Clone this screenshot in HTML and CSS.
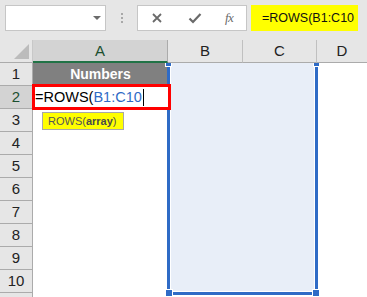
FILE: index.html
```html
<!DOCTYPE html>
<html>
<head>
<meta charset="utf-8">
<link rel="stylesheet" href="styles.css">
</head>
<body>
<div class="toolbar">
  <div class="namebox"><span class="dd"></span></div>
  <div class="grip"><i></i><i></i><i></i></div>
  <div class="fxbox">
    <svg class="ico" width="12" height="12" viewBox="0 0 12 12"><path d="M2 2 L10 10 M10 2 L2 10" stroke="#6a6a6a" stroke-width="1.8" fill="none"/></svg>
    <svg class="ico" width="14" height="12" viewBox="0 0 14 12"><path d="M1.5 6.5 L5 10 L12.5 2" stroke="#6a6a6a" stroke-width="2.2" fill="none"/></svg>
    <span class="fx">fx</span>
  </div>
  <div class="formula">=ROWS(B1:C10</div>
</div>
<div class="sheet">
  <div class="sel"><i class="h tl"></i><i class="h tr"></i><i class="h bl"></i><i class="h br"></i></div>

  <div class="corner"><span class="tri"></span></div>
  <div class="ch ch-a">A</div>
  <div class="ch">B</div>
  <div class="ch">C</div>
  <div class="ch ch-d">D</div>

  <div class="rh">1</div><div class="cell hdr">Numbers</div><div class="cell"></div>
  <div class="rh rh-on">2</div>
  <div class="cell edit">=ROWS(<span class="ref">B1:C10</span><span class="caret"></span>
    <span class="frame"></span>
    <div class="tip">ROWS(<b>array</b>)</div>
  </div>
  <div class="cell"></div>
  <div class="rh">3</div><div class="cell"></div><div class="cell"></div>
  <div class="rh">4</div><div class="cell"></div><div class="cell"></div>
  <div class="rh">5</div><div class="cell"></div><div class="cell"></div>
  <div class="rh">6</div><div class="cell"></div><div class="cell"></div>
  <div class="rh">7</div><div class="cell"></div><div class="cell"></div>
  <div class="rh">8</div><div class="cell"></div><div class="cell"></div>
  <div class="rh">9</div><div class="cell"></div><div class="cell"></div>
  <div class="rh">10</div><div class="cell"></div><div class="cell"></div>
  <div class="rh rh-cut"></div><div class="cell"></div><div class="cell"></div><div class="cell"></div><div class="cell"></div>
</div>
</body>
</html>
```
FILE: styles.css
```css
* { box-sizing: border-box; }
html, body { margin: 0; padding: 0; }
body {
  width: 367px; height: 297px; overflow: hidden;
  background: #fff;
  font-family: "Liberation Sans", Arial, sans-serif;
}
.toolbar {
  height: 40px;
  background: #e6e6e6;
  display: flex;
  align-items: flex-start;
  padding-top: 5px;
}
.namebox {
  margin-left: 5px;
  width: 101px; height: 26px;
  background: #fff;
  border: 1px solid #c6c6c6;
  position: relative;
}
.dd {
  position: absolute; left: 87px; top: 10px;
  width: 0; height: 0;
  border-left: 4px solid transparent;
  border-right: 4px solid transparent;
  border-top: 4px solid #6b6b6b;
}
.grip {
  width: 31px; height: 26px;
  display: flex; flex-direction: column; align-items: center;
  justify-content: center; gap: 2px;
  padding-left: 1px;
}
.grip i { display: block; width: 2px; height: 2px; background: #a8a8a8; }
.fxbox {
  width: 110px; height: 26px;
  background: #fff;
  border: 1px solid #c6c6c6;
  display: flex; align-items: center;
  padding-left: 13px;
}
.fxbox .ico { display: block; }
.fxbox .ico + .ico { margin-left: 25px; }
.fx {
  margin-left: 23px;
  font-family: "Liberation Serif", serif;
  font-style: italic;
  font-size: 13px;
  color: #6a6a6a;
  letter-spacing: -0.5px;
}
.formula {
  margin-left: 4px;
  width: 107px; height: 26px;
  background: #ffff00;
  font-size: 12.5px;
  line-height: 26px;
  padding-left: 11px;
  color: #111;
}
.sheet {
  display: grid;
  grid-template-columns: 33px 135px 75px 74px 50px;
  grid-template-rows: repeat(11, 23px) 4px;
  height: 257px;
  overflow: hidden;
  position: relative;
}
.corner {
  background: #e6e6e6;
  border-right: 1px solid #c8c8c8;
  border-bottom: 1px solid #ababab;
  position: relative;
}
.tri {
  position: absolute; right: 3px; bottom: 3px;
  width: 0; height: 0;
  border-left: 15px solid transparent;
  border-bottom: 15px solid #bcbcbc;
}
.ch {
  background: #e6e6e6;
  border-right: 1px solid #c0c0c0;
  border-bottom: 1px solid #ababab;
  text-align: center;
  font-size: 15px;
  line-height: 22px;
  color: #222;
}
.ch-a {
  background: #d3d3d3;
  border-bottom: 2px solid #217346;
  border-right-color: #ababab;
  color: #1c4f2f;
}
.ch-d { border-right: none; }
.rh {
  background: #e6e6e6;
  border-right: 1px solid #ababab;
  border-bottom: 1px solid #ababab;
  text-align: center;
  font-size: 15px;
  line-height: 22px;
  color: #222;
}
.rh-cut { border-bottom: none; }
.rh-on { background: #d3d3d3; color: #1c4f2f; }
.cell { background: #fff; }
.hdr {
  background: #808080;
  color: #fff;
  font-weight: bold;
  font-size: 14px;
  text-align: center;
  line-height: 22px;
}
.edit {
  position: relative;
  font-size: 14.5px;
  line-height: 23px;
  padding-left: 2px;
  color: #000;
  white-space: nowrap;
  z-index: 3;
}
.ref { color: #2f6bc6; }
.caret {
  display: inline-block;
  width: 1px; height: 17px;
  background: #000;
  vertical-align: -4px;
  margin-left: 1px;
}
.frame {
  position: absolute;
  top: -2px; left: -1px; right: -3px; bottom: -1px;
  border: 3px solid #ff0000;
}
.tip {
  position: absolute;
  left: 9px; top: 26px;
  width: 82px; height: 18px;
  background: #ffff00;
  border: 1px solid #a8a8a8;
  font-size: 11px;
  line-height: 16px;
  padding-left: 5px;
  color: #555;
}
.tip b { color: #4a4a4a; }
.sel {
  grid-column: 3 / 5;
  grid-row: 2 / 12;
  margin: 0 -1px -2px -1px;
  border: 3px solid #2f6bc6;
  border-top: none;
  background: #e8eef8;
  box-shadow: inset 1px 0 0 #fff, inset -1px 0 0 #fff, inset 0 -1px 0 #fff;
  position: relative;
  z-index: 2;
}
.h {
  position: absolute;
  display: block;
  background: #2f6bc6;
  border: 1px solid #fff;
}
.tl { top: 0; left: -5px; width: 7px; height: 4px; border-top: none; }
.tr { top: 0; right: -5px; width: 7px; height: 4px; border-top: none; }
.bl { bottom: -5px; left: -5px; width: 8px; height: 8px; }
.br { bottom: -5px; right: -5px; width: 8px; height: 8px; }
```
